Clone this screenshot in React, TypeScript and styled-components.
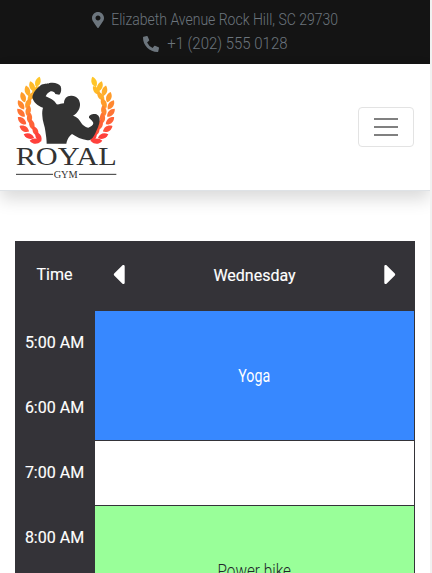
import React from "react";
import styled, { createGlobalStyle } from "styled-components";
import { FaMapMarkerAlt, FaPhoneAlt, FaCaretLeft, FaCaretRight } from "react-icons/fa";

const GlobalStyle = createGlobalStyle`
  * { box-sizing: border-box; }
  body { margin: 0; background: #f1f1f1; overflow: hidden; }
`;

const Page = styled.div`
  width: 430px;
  height: 573px;
  overflow: hidden;
  background: #fff;
  font-family: Roboto, sans-serif;
`;

const TopBar = styled.div`
  height: 64px;
  padding-top: 8px;
  background: #141414;
  color: #6c757d;
`;

const Contact = styled.div`
  display: flex;
  justify-content: center;
  align-items: center;
  gap: 8px;
  height: 24px;
  font-size: 16px;
`;

const ContactIcon = styled.span<{ $width: number }>`
  display: flex;
  justify-content: center;
  width: ${(p) => p.$width}px;
  svg { flex: none; display: block; }
`;

const Narrow = styled.span<{ $width: number; $scale: number; $weight?: number }>`
  display: flex;
  justify-content: center;
  width: ${(p) => p.$width}px;
  white-space: nowrap;
  font-weight: ${(p) => p.$weight ?? 300};
  line-height: 24px;
  > span { flex: none; transform: scaleX(${(p) => p.$scale}); }
`;

const Header = styled.header`
  display: flex;
  justify-content: space-between;
  align-items: center;
  height: 127px;
  padding: 0 16px 0 10px;
  border-bottom: 1px solid #dee2e6;
  box-shadow: 0 8px 16px rgba(0, 0, 0, 0.15);
`;

const Toggler = styled.button`
  display: flex;
  flex-direction: column;
  justify-content: center;
  align-items: center;
  gap: 6px;
  width: 56px;
  height: 40px;
  padding: 0;
  background: transparent;
  border: 1px solid #e3e3e3;
  border-radius: 4px;
`;

const Bar = styled.span`
  width: 24px;
  height: 2px;
  background: #808080;
`;

const Schedule = styled.main`
  display: grid;
  grid-template-columns: 80px 320px;
  grid-template-rows: 70px auto;
  width: 400px;
  margin: 50px 0 0 15px;
  background: #343338;
  color: #fff;
  font-size: 16px;
  font-weight: 400;
  -webkit-text-stroke: 0.15px currentColor;
`;

const TimeHead = styled.div`
  display: flex;
  justify-content: center;
  align-items: center;
  padding: 0 1px 3px 0;
`;

const DayHead = styled.div`
  display: flex;
  justify-content: space-between;
  align-items: center;
  padding: 0 8px 4px 7px;
  svg { display: block; }
`;

const DayName = styled.span`
  padding-top: 3px;
`;

const Hours = styled.div`
  display: flex;
  flex-direction: column;
`;

const Hour = styled.div`
  display: flex;
  justify-content: center;
  align-items: center;
  height: 65px;
  padding: 0 1px 3px 0;
`;

const Slots = styled.div`
  display: flex;
  flex-direction: column;
  -webkit-text-stroke: 0;
`;

const Slot = styled.div<{ $hours: number; $bg: string; $ink: string }>`
  display: flex;
  justify-content: center;
  align-items: center;
  height: ${(p) => p.$hours * 65}px;
  border-right: 1px solid #343338;
  border-bottom: 1px solid #343338;
  background: ${(p) => p.$bg};
  color: ${(p) => p.$ink};
  font-size: 18px;
`;

const leaves: [number, number, number, number][] = [
  [83, 33, 24, 0], [66, 47, -16, 1], [76, 59, 44, 1], [52, 60, -10, 2], [63, 76, 44, 2],
  [39, 79, -14, 3], [54, 97, 32, 3], [33, 102, -28, 4], [54, 119, 18, 4],
  [33, 126, -38, 5], [58, 141, 8, 5], [36, 150, -44, 6], [65, 161, -8, 6],
  [43, 174, -54, 7], [76, 181, -18, 7], [57, 196, -66, 8], [85, 198, -24, 8], [76, 211, -80, 8],
];
const flame = ["#ffc629", "#ffba27", "#ffad2b", "#ff9b2b", "#ff8730", "#ff7434", "#ff6238", "#ff513a", "#ff403b"];

const Wreath = () => (
  <>
    {leaves.map(([x, y, angle, tone], i) => (
      <path
        key={i}
        d="M-1-17C10-8 12 5 2 16C-9 8-11-6-1-17Z"
        fill={flame[tone]}
        transform={`translate(${x} ${y}) rotate(${angle})`}
      />
    ))}
  </>
);

const Logo = () => (
  <svg width="112" height="112" viewBox="0 0 336 336" aria-label="Royal Gym">
    <Wreath />
    <g transform="translate(336 0) scale(-1 1)"><Wreath /></g>
    <path
      fill="#333"
      transform="translate(54 18)"
      d="M13 61C15 46 27 34 38 25C47 18 57 22 64 18C77 15 92 18 98 28C101 37 100 48 94 53L82 51C80 45 74 42 68 43C61 46 56 51 53 58C66 64 78 68 86 82C94 83 99 79 108 79C108 64 117 55 131 56C146 56 155 67 156 80C157 94 149 108 135 116C153 122 156 133 164 143C171 148 177 152 181 152C189 149 196 144 196 138C195 132 187 127 183 122C182 114 193 110 202 111C212 113 216 122 215 130C215 143 207 158 201 171C195 183 188 191 178 190C160 187 145 180 132 171C125 177 118 184 115 200H56C56 188 54 176 52 162C51 148 43 132 43 116C42 106 43 98 45 92C29 87 17 77 13 61Z"
    />
    <g fill="#333" fontFamily="Liberation Serif, serif">
      <text x="17" y="282" fontSize="73" textLength="303" lengthAdjust="spacingAndGlyphs">ROYAL</text>
      <text x="131" y="320" fontSize="34" textLength="72" lengthAdjust="spacingAndGlyphs">GYM</text>
    </g>
    <path d="M18 310H129M207 310H319" stroke="#333" strokeWidth="3" />
  </svg>
);

const hours = ["5:00 AM", "6:00 AM", "7:00 AM", "8:00 AM", "9:00 AM"];

export default function App() {
  return (
    <>
      <GlobalStyle />
      <Page>
        <TopBar>
          <Contact>
            <ContactIcon $width={12}><FaMapMarkerAlt size={16} /></ContactIcon>
            <Narrow $width={227} $scale={0.875}><span>Elizabeth Avenue Rock Hill, SC 29730</span></Narrow>
          </Contact>
          <Contact>
            <ContactIcon $width={16}><FaPhoneAlt size={16} /></ContactIcon>
            <Narrow $width={120} $scale={0.935}><span>+1 (202) 555 0128</span></Narrow>
          </Contact>
        </TopBar>
        <Header>
          <Logo />
          <Toggler aria-label="Menu"><Bar /><Bar /><Bar /></Toggler>
        </Header>
        <Schedule>
          <TimeHead>Time</TimeHead>
          <DayHead>
            <FaCaretLeft size={33} />
            <DayName>Wednesday</DayName>
            <FaCaretRight size={33} />
          </DayHead>
          <Hours>{hours.map((h) => <Hour key={h}>{h}</Hour>)}</Hours>
          <Slots>
            <Slot $hours={2} $bg="#3788ff" $ink="#fff"><Narrow $width={32} $scale={0.79} $weight={400}><span>Yoga</span></Narrow></Slot>
            <Slot $hours={1} $bg="#fff" $ink="#212529" />
            <Slot $hours={2} $bg="#99ff99" $ink="#212529"><Narrow $width={73} $scale={0.85}><span>Power bike</span></Narrow></Slot>
          </Slots>
        </Schedule>
      </Page>
    </>
  );
}
